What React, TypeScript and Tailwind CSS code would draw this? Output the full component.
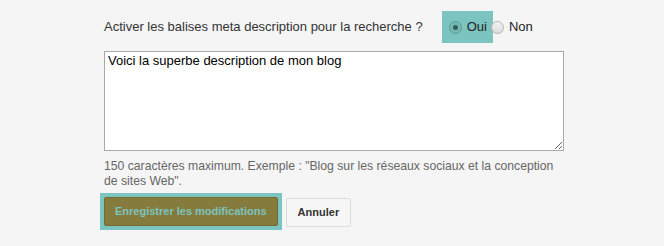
import React from "react";

function Radio({ checked, tinted }: { checked?: boolean; tinted?: boolean }) {
  return (
    <span
      className={
        "relative inline-flex items-center justify-center w-[13px] h-[13px] rounded-full border " +
        (tinted
          ? "border-[#5c9a96] bg-[#74b9b4]"
          : "border-[#b4b4b4] bg-gradient-to-b from-[#f2f2f2] to-[#dcdcdc]")
      }
    >
      {checked && <span className="block w-[5px] h-[5px] rounded-full bg-[#355e5b]" />}
    </span>
  );
}

export default function App() {
  return (
    <div className="w-[664px] h-[246px] bg-[#f5f5f5] pl-[104px] pt-[11px] font-['Liberation_Sans',Arial,sans-serif] overflow-hidden">
      <div className="flex items-center h-[32px]">
        <span className="text-[13px] text-[#333]">
          Activer les balises meta description pour la recherche ?
        </span>
        <span className="ml-[19px] h-[32px] flex items-center bg-[#7cc4bf] pl-[7px] pr-[6px]">
          <Radio checked tinted />
          <span className="ml-[5px] text-[13px] text-[#222]">Oui</span>
        </span>
        <span className="-ml-[2px] flex items-center">
          <Radio />
          <span className="ml-[5px] text-[13px] text-[#222]">Non</span>
        </span>
      </div>
      <textarea
        readOnly
        defaultValue="Voici la superbe description de mon blog"
        className="mt-[8px] block w-[460px] h-[100px] border border-[#a9a9a9] bg-white px-[3px] py-[1px] text-[13px] leading-[15px] text-black outline-none font-['Liberation_Sans',Arial,sans-serif]"
      />
      <p className="mt-[8px] w-[480px] whitespace-nowrap text-[12.2px] leading-[15px] text-[#666]">
        150 caractères maximum. Exemple : "Blog sur les réseaux sociaux et la conception
        <br />
        de sites Web".
      </p>
      <div className="mt-[4px] -ml-[4px] flex items-center">
        <div className="bg-[#7cc4bf] p-[4px]">
          <button className="h-[29px] px-[10px] rounded-[2px] border border-[#736a32] bg-[#857b3c] text-[11px] font-bold text-[#7cc4bf]">
            Enregistrer les modifications
          </button>
        </div>
        <button className="ml-[4px] mt-[2px] h-[29px] px-[11px] rounded-[2px] border border-[#dcdcdc] bg-[#f6f6f6] text-[11px] font-bold text-[#333]">
          Annuler
        </button>
      </div>
    </div>
  );
}
